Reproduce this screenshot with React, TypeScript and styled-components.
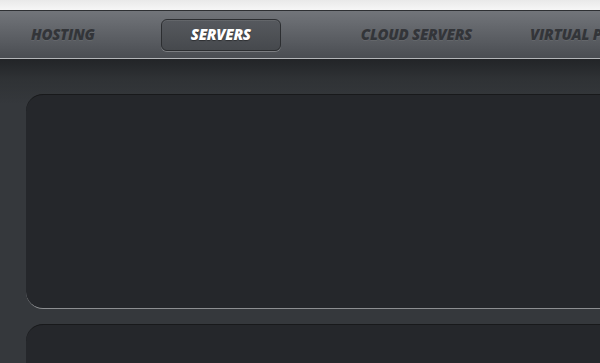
import * as React from 'react';
import styled, { createGlobalStyle } from 'styled-components';

const GlobalStyle = createGlobalStyle`
    html, body {
        margin: 0;
        padding: 0;
        width: 600px;
        height: 363px;
        overflow: hidden;
        background: #35383c;
    }
    #root {
        height: 100%;
    }
`;

const Page = styled.div`
    display: flex;
    flex-direction: column;
    height: 363px;
    font-family: 'Open Sans', 'Liberation Sans', sans-serif;
`;

const TopStrip = styled.div`
    height: 10px;
    background: linear-gradient(#e9e9e9, #f6f6f6);
    border-bottom: 1px solid #2e3033;
    flex-shrink: 0;
`;

const NavBar = styled.nav`
    display: flex;
    align-items: center;
    height: 47px;
    padding-left: 1px;
    background: linear-gradient(#72757a, #4a4d52);
    border-bottom: 1px solid #b3b5b8;
    white-space: nowrap;
    overflow: hidden;
    flex-shrink: 0;
`;

const NavItem = styled.a<{ $active?: boolean; $offset: number }>`
    display: flex;
    align-items: center;
    justify-content: center;
    flex-shrink: 0;
    box-sizing: border-box;
    width: ${(p) => (p.$active ? '120px' : 'auto')};
    height: 32px;
    padding: 0 29px 1px;
    margin-left: ${(p) => p.$offset}px;
    border-radius: 6px;
    font-size: 15px;
    font-weight: 800;
    font-style: italic;
    letter-spacing: -0.3px;
    color: ${(p) => (p.$active ? '#ffffff' : '#333539')};
    background: ${(p) => (p.$active ? 'linear-gradient(#56595e, #46494d)' : 'transparent')};
    border: 1px solid ${(p) => (p.$active ? '#2c2e31' : 'transparent')};
    box-shadow: ${(p) => (p.$active ? '0 1px 0 rgba(255,255,255,0.25), inset 0 1px 0 rgba(255,255,255,0.08)' : 'none')};
    text-shadow: ${(p) => (p.$active ? '0 1px 1px rgba(0,0,0,0.4)' : '0 1px 0 rgba(255,255,255,0.08)')};
    cursor: pointer;
`;

const Content = styled.main`
    flex: 1;
    display: flex;
    flex-direction: column;
    gap: 15px;
    padding: 35px 0 0 26px;
    background: linear-gradient(#222427 0px, #2f3235 20px, #35383c 45px, #35383c 100%);
    overflow: hidden;
`;

const Panel = styled.section<{ $height: number }>`
    flex-shrink: 0;
    width: 620px;
    height: ${(p) => p.$height}px;
    box-sizing: border-box;
    background: #25272b;
    border-radius: 17px;
    border-top: 1px solid #18191b;
    border-bottom: 1px solid #8c8e91;
`;

const items = [
    { label: 'HOSTING', offset: 0 },
    { label: 'SERVERS', offset: 36, active: true },
    { label: 'CLOUD SERVERS', offset: 50 },
    { label: 'VIRTUAL PRIVATE SERVERS', offset: -2 },
];

const App: React.FC = () => {
    return (
        <Page>
            <GlobalStyle />
            <TopStrip />
            <NavBar>
                {items.map((item) => (
                    <NavItem key={item.label} $active={item.active} $offset={item.offset}>
                        {item.label}
                    </NavItem>
                ))}
            </NavBar>
            <Content>
                <Panel $height={215} />
                <Panel $height={215} />
            </Content>
        </Page>
    );
};

export default App;
